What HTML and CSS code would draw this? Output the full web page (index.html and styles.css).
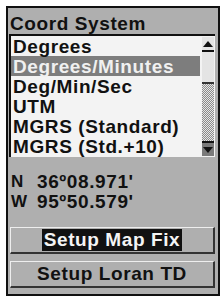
FILE: index.html
```html
<!DOCTYPE html>
<html lang="en">
<head>
  <meta charset="UTF-8">
  <title>Coord System</title>
  <link rel="stylesheet" href="styles.css">
</head>
<body>
  <div class="frame">
    <div class="title">Coord System</div>

    <!-- Format list -->
    <div class="list">
      <div class="items">
        <div class="item">Degrees</div>
        <div class="item selected">Degrees/Minutes</div>
        <div class="item">Deg/Min/Sec</div>
        <div class="item">UTM</div>
        <div class="item">MGRS (Standard)</div>
        <div class="item">MGRS (Std.+10)</div>
      </div>
      <div class="scrollbar">
        <div class="arrow up"><span></span></div>
        <div class="track"><div class="thumb"></div></div>
        <div class="arrow down"><span></span></div>
      </div>
    </div>

    <!-- Current position -->
    <div class="coords">
      <div class="coord"><span class="dir">N</span><span>36º08.971'</span></div>
      <div class="coord"><span class="dir">W</span><span>95º50.579'</span></div>
    </div>

    <div class="buttons">
      <div class="button"><span class="focus">Setup Map Fix</span></div>
      <div class="button"><span>Setup Loran TD</span></div>
    </div>
  </div>
</body>
</html>
```

FILE: styles.css
```css
body {
  margin: 0;
  background-color: #ffffff;
  font-family: "Liberation Sans", Arial, sans-serif;
  font-weight: bold;
  color: #111;
}
.frame {
  margin: 6px 0 0 6px;
  width: 210px;
  height: 286px;
  border: 2px solid #111;
  background-color: #afafaf;
  display: flex;
  flex-direction: column;
}
.title {
  height: 26px;
  line-height: 31px;
  padding-left: 2px;
  font-size: 19px;
  letter-spacing: 0.6px;
}
.list {
  display: flex;
  margin: 0 3px 0 1px;
  height: 121px;
  border-top: 2px solid #111;
  border-left: 2px solid #111;
  background-color: #f3f3f3;
}
.items {
  flex: 1;
}
.item {
  height: 20px;
  line-height: 21px;
  padding-left: 2px;
  margin-right: 2px;
  font-size: 19px;
  letter-spacing: 0.6px;
  white-space: nowrap;
}
.selected {
  background-color: #7d7d7d;
  color: #f0f0f0;
}
.scrollbar {
  width: 12px;
  margin: 1px 1px 1px 0;
  display: flex;
  flex-direction: column;
}
.arrow {
  height: 13px;
  display: flex;
  align-items: center;
  justify-content: center;
  background-color: #e4e4e4;
}
.arrow span {
  width: 0;
  height: 0;
  border-left: 5px solid transparent;
  border-right: 5px solid transparent;
}
.up {
  border-bottom: 2px solid #111;
}
.up span {
  border-bottom: 6px solid #111;
}
.down {
  background-color: #7a7a7a;
  border-top: 2px solid #111;
}
.down span {
  border-top: 6px solid #111;
}
.track {
  flex: 1;
  background-color: #c8c8c8;
  background-image: repeating-conic-gradient(#8a8a8a 0 25%, #e6e6e6 0 50%);
  background-size: 2px 2px;
}
.thumb {
  height: 30px;
  background-color: #e4e4e4;
  border-bottom: 2px solid #333;
}
.coords {
  padding: 15px 0 0 3px;
}
.coord {
  height: 20px;
  line-height: 20px;
  font-size: 19px;
  letter-spacing: 0.6px;
  display: flex;
}
.dir {
  width: 26px;
  font-size: 17px;
}
.buttons {
  display: flex;
  flex-direction: column;
  gap: 7px;
  margin-top: 15px;
  padding: 0 3px 0 2px;
}
.button {
  height: 24px;
  display: flex;
  align-items: center;
  justify-content: center;
  border-top: 1px solid #eeeeee;
  border-left: 1px solid #eeeeee;
  border-bottom: 2px solid #333;
  border-right: 2px solid #333;
  font-size: 19px;
  letter-spacing: 0.6px;
}
.focus {
  background-color: #111;
  color: #f4f4f4;
  padding: 0 2px;
}
```
